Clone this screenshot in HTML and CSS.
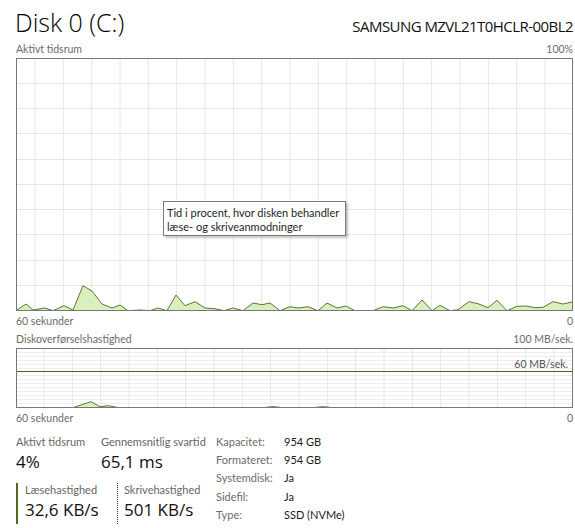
FILE: index.html
```html
<!DOCTYPE html>
<html lang="da">
<head>
<meta charset="utf-8">
<title>Disk 0 (C:)</title>
<link rel="stylesheet" href="styles.css">
</head>
<body>
<div class="page">
  <header class="head">
    <h1 class="title">Disk 0 (C:)</h1>
    <div class="model">SAMSUNG MZVL21T0HCLR-00BL2</div>
  </header>

  <div class="axis axis-top"><span>Aktivt tidsrum</span><span>100%</span></div>
  <div class="chart chart-main">
    <svg class="plot" width="557" height="253" viewBox="0 0 557 253">
      <g class="grid">
        <path d="M19 0V253M47.33 0V253M75.67 0V253M104 0V253M132.33 0V253M160.67 0V253M189 0V253M217.33 0V253M245.67 0V253M274 0V253M302.33 0V253M330.67 0V253M359 0V253M387.33 0V253M415.67 0V253M444 0V253M472.33 0V253M500.67 0V253M529 0V253"/>
        <path d="M0 25.5H557M0 50.5H557M0 75.5H557M0 101.5H557M0 126.5H557M0 151.5H557M0 176.5H557M0 202.5H557M0 227.5H557"/>
      </g>
      <polygon class="area" points="0,253 0,252.7 10,246 17,252 29,250 37,252.7 48,247.7 57,252 67,227.7 76,233 86,246 96,250 104,247 112,252.7 124,252 134,252.7 142,250 151,252.7 160,237 169,247.7 179,243.7 189,250 199,250.7 208,252.7 217,250 227,252.7 237,245 246,246.7 254,245 264,252.7 274,248.7 282,250 292,248.7 302,252.7 311,245 321,250 330,248 339,252.7 349,252.7 357,252.7 367,248.7 377,250 387,247.7 396,252.7 406,242 416,252.7 424,247.3 434,252.7 442,251.7 453,243.7 462,245.7 472,249.7 481,242.3 491,252.7 501,248.3 510,248 519,249.7 527,249.3 537,243.7 547,246 556,244 556,253"/>
      <polyline class="line" points="0,252.7 10,246 17,252 29,250 37,252.7 48,247.7 57,252 67,227.7 76,233 86,246 96,250 104,247 112,252.7 124,252 134,252.7 142,250 151,252.7 160,237 169,247.7 179,243.7 189,250 199,250.7 208,252.7 217,250 227,252.7 237,245 246,246.7 254,245 264,252.7 274,248.7 282,250 292,248.7 302,252.7 311,245 321,250 330,248 339,252.7 349,252.7 357,252.7 367,248.7 377,250 387,247.7 396,252.7 406,242 416,252.7 424,247.3 434,252.7 442,251.7 453,243.7 462,245.7 472,249.7 481,242.3 491,252.7 501,248.3 510,248 519,249.7 527,249.3 537,243.7 547,246 556,244"/>
      <rect class="frame" x="0.5" y="0.5" width="556" height="252"/>
    </svg>
    <div class="tooltip">Tid i procent, hvor disken behandler<br>læse- og skriveanmodninger</div>
  </div>
  <div class="axis axis-bottom"><span>60 sekunder</span><span>0</span></div>

  <div class="axis axis-top2"><span>Diskoverførselshastighed</span><span>100 MB/sek.</span></div>
  <div class="chart chart-rate">
    <svg class="plot" width="557" height="60" viewBox="0 0 557 60">
      <g class="grid grid-fine">
        <path d="M0 4.5H557M0 8.5H557M0 12.5H557M0 16.5H557M0 20.5H557M0 27.5H557M0 31.5H557M0 35.5H557M0 39.5H557M0 43.5H557M0 47.5H557M0 51.5H557M0 55.5H557"/>
      </g>
      <g class="grid">
        <path d="M28 0V60M56.33 0V60M84.67 0V60M113 0V60M141.33 0V60M169.67 0V60M198 0V60M226.33 0V60M254.67 0V60M283 0V60M311.33 0V60M339.67 0V60M368 0V60M396.33 0V60M424.67 0V60M453 0V60M481.33 0V60M509.67 0V60M538 0V60"/>
      </g>
      <path class="limit" d="M0 23.5H557"/>
      <polygon class="area" points="58,59.3 75,53.7 84,58.7 92,57.7 101,59.3"/>
      <polyline class="line" points="58,59.3 75,53.7 84,58.7 92,57.7 101,59.3"/>
      <polyline class="line" points="250,59.3 257,58.6 264,59.3"/>
      <polyline class="line" points="300,59.3 307,58.7 314,59.3"/>
      <rect class="frame" x="0.5" y="0.5" width="556" height="59"/>
    </svg>
    <span class="limit-label">60 MB/sek.</span>
  </div>
  <div class="axis axis-bottom"><span>60 sekunder</span><span>0</span></div>

  <section class="stats">
    <div class="stats-left">
      <div class="stat-row">
        <div class="stat stat-active">
          <div class="stat-label">Aktivt tidsrum</div>
          <div class="stat-value">4%</div>
        </div>
        <div class="stat">
          <div class="stat-label">Gennemsnitlig svartid</div>
          <div class="stat-value">65,1 ms</div>
        </div>
      </div>
      <div class="stat-row">
        <div class="stat rate rate-read">
          <div class="stat-label">Læsehastighed</div>
          <div class="stat-value">32,6 KB/s</div>
        </div>
        <div class="stat rate rate-write">
          <div class="stat-label">Skrivehastighed</div>
          <div class="stat-value">501 KB/s</div>
        </div>
      </div>
    </div>
    <dl class="props">
      <dt>Kapacitet:</dt><dd>954 GB</dd>
      <dt>Formateret:</dt><dd>954 GB</dd>
      <dt>Systemdisk:</dt><dd>Ja</dd>
      <dt>Sidefil:</dt><dd>Ja</dd>
      <dt>Type:</dt><dd>SSD (NVMe)</dd>
    </dl>
  </section>
</div>
</body>
</html>
```

FILE: styles.css
```css
html, body {
  margin: 0;
  padding: 0;
  background: #ffffff;
}

body {
  font-family: "Lato", "Open Sans", "DejaVu Sans", sans-serif;
  color: #1b1b1b;
}

.page {
  width: 557px;
  padding: 0 2px 0 16px;
}

.head {
  display: flex;
  align-items: baseline;
  padding-top: 6px;
}

.title {
  margin: 0 0 0 -1px;
  font-family: "Open Sans", "Noto Sans", sans-serif;
  font-size: 25px;
  font-weight: 300;
  line-height: 32px;
  color: #000;
}

.model {
  flex: 1;
  text-align: right;
  font-family: "Open Sans", "Noto Sans", sans-serif;
  font-size: 15px;
  letter-spacing: -0.55px;
  line-height: 20px;
  color: #111;
}

.axis {
  display: flex;
  justify-content: space-between;
  font-size: 10.5px;
  line-height: 14px;
  color: #6b6b6b;
}

.axis-top {
  margin-top: 4px;
  margin-bottom: 2px;
}

.axis-bottom {
  margin-top: 3px;
}

.axis-top2 {
  margin-top: 4px;
  margin-bottom: 2px;
}

.chart {
  position: relative;
  width: 557px;
}

.plot {
  display: block;
}

.grid path {
  stroke: #e6e6e6;
  stroke-width: 1;
  fill: none;
}

.grid-fine path {
  stroke: #eeeeee;
}

.area {
  fill: #d8f0bd;
  stroke: none;
}

.line {
  fill: none;
  stroke: #5c7631;
  stroke-width: 1;
  stroke-linejoin: round;
}

.limit {
  stroke: #4e5a30;
  stroke-width: 1;
  fill: none;
}

.frame {
  fill: none;
  stroke: #777777;
  stroke-width: 1;
}

.tooltip {
  position: absolute;
  left: 147px;
  top: 143px;
  width: 176px;
  padding: 4px 2px 1px 3px;
  background: #ffffff;
  border: 1px solid #7a7a7a;
  box-shadow: 2px 2px 2px rgba(0, 0, 0, 0.22);
  font-size: 11px;
  line-height: 14px;
  white-space: nowrap;
  color: #1e1e1e;
}

.limit-label {
  position: absolute;
  right: 5px;
  top: 9px;
  font-size: 10.5px;
  line-height: 14px;
  color: #555;
}

.stats {
  display: flex;
  margin-top: 10px;
}

.stats-left {
  width: 200px;
}

.stat-row {
  display: flex;
}

.stat-label {
  font-size: 11px;
  line-height: 14px;
  color: #666;
}

.stat-value {
  font-family: "Open Sans", "Noto Sans", sans-serif;
  font-size: 17px;
  line-height: 26px;
  color: #111;
}

.stat-active {
  width: 85px;
}

.stat-row + .stat-row {
  margin-top: 8px;
}

.rate {
  box-sizing: border-box;
  padding-left: 7px;
  padding-bottom: 1px;
}

.rate-read {
  width: 101px;
  border-left: 2px solid #4f6b1f;
}

.rate-write {
  border-left: 1px dotted #333;
  padding-left: 6px;
}

.props {
  display: grid;
  grid-template-columns: 68px auto;
  margin: -2px 0 0 0;
  font-size: 11px;
  line-height: 17.4px;
}

.props dt {
  color: #6b6b6b;
}

.props dd {
  margin: 0;
  color: #1b1b1b;
}
```
